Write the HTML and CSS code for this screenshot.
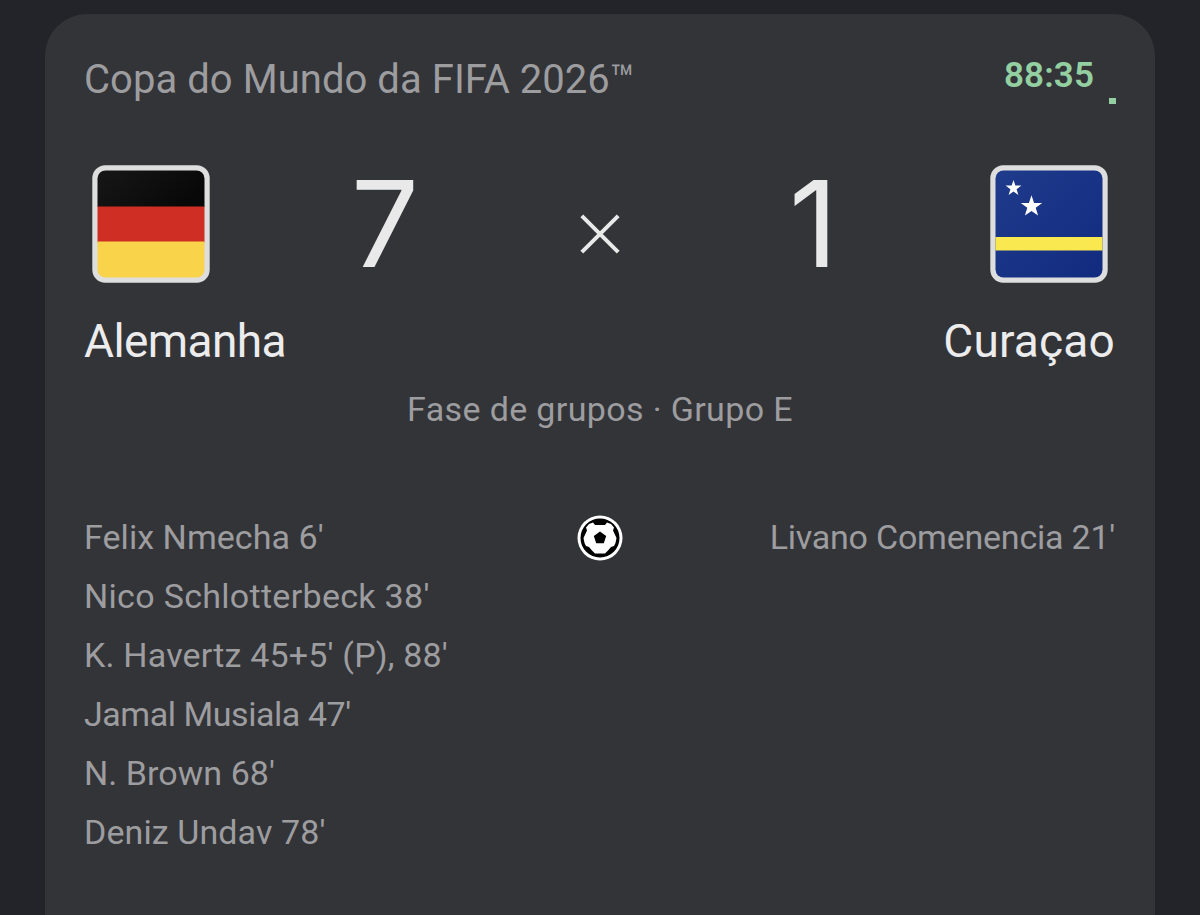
FILE: index.html
```html
<!DOCTYPE html>
<html lang="pt-BR">
<head>
<meta charset="utf-8">
<title>Alemanha × Curaçao</title>
<link rel="stylesheet" href="styles.css">
</head>
<body>
<main class="card">
  <header class="top">
    <h1 class="competition">Copa do Mundo da FIFA 2026™</h1>
    <div class="clock"><span class="time">88:35</span><span class="live-dot"></span></div>
  </header>

  <section class="score">
    <svg class="flag" viewBox="0 0 118 118" aria-label="Alemanha">
      <defs>
        <clipPath id="flag-clip"><rect x="5.5" y="5.5" width="107" height="107" rx="8"/></clipPath>
        <linearGradient id="navy" x1="0" y1="0" x2="1" y2="1"><stop offset="0" stop-color="#203c8c"/><stop offset="1" stop-color="#112a7e"/></linearGradient>
        <linearGradient id="black" x1="0" y1="0" x2="1" y2="0.4"><stop offset="0" stop-color="#181818"/><stop offset="1" stop-color="#080808"/></linearGradient>
      </defs>
      <rect x="0.3" y="0.3" width="117.4" height="117.4" rx="13" fill="#dedede"/>
      <g clip-path="url(#flag-clip)">
        <rect width="118" height="42" fill="url(#black)"/>
        <rect y="41.5" width="118" height="36" fill="#cf2e24"/>
        <rect y="76.5" width="118" height="42" fill="#f9d34a"/>
      </g>
    </svg>
    <div class="goals home">7</div>
    <svg class="times" viewBox="0 0 40 40"><path d="M1.800 1.800 38.200 38.200M38.200 1.800 1.800 38.200"/></svg>
    <div class="goals away">1</div>
    <svg class="flag" viewBox="0 0 118 118" aria-label="Curaçao">
      <rect x="0.3" y="0.3" width="117.4" height="117.4" rx="13" fill="#dedede"/>
      <g clip-path="url(#flag-clip)">
        <rect width="118" height="118" fill="url(#navy)"/>
        <rect y="72" width="118" height="13.5" fill="#f9e84f"/>
        <path fill="#fff" d="M23.5 15l1.9 5.6h6l-4.8 3.6 1.8 5.8-4.9-3.5-4.9 3.5 1.8-5.8-4.8-3.6h6z"/>
        <path fill="#fff" d="M41.5 30.200l2.600 7.700h8.100l-6.500 4.900 2.400 7.800-6.600-4.700-6.600 4.700 2.400-7.800-6.500-4.900h8.100z"/>
      </g>
    </svg>
  </section>

  <section class="teams">
    <span class="team germany">Alemanha</span>
    <span class="team curacao">Curaçao</span>
  </section>
  <p class="stage">Fase de grupos · Grupo E</p>

  <section class="scorers">
    <ul class="list">
      <li class="felix">Felix Nmecha 6'</li>
      <li class="nico">Nico Schlotterbeck 38'</li>
      <li class="kai">K. Havertz 45+5' (P), 88'</li>
      <li class="jamal">Jamal Musiala 47'</li>
      <li class="brown">N. Brown 68'</li>
      <li class="deniz">Deniz Undav 78'</li>
    </ul>
    <svg class="ball" viewBox="-23 -23 46 46">
      <circle r="22.500" fill="#fff"/>
      <circle r="19.500" fill="#000"/>
      <path fill="#fff" d="M-5-13H5L7-15.500 11-14 14-10.500 13-7.500 16.500 0 15.500 5 14 8 11 9 8 12.500 5 15.500H-5L-8 12.500-11 9-14 8-15.500 5-16.500 0-13-7.500-14-10.500-11-14-7-15.500z"/>
      <path fill="#000" d="M0-6.500 6.200-2 3.800 5.200H-3.800L-6.200-2z"/>
    </svg>
    <ul class="list right">
      <li class="livano">Livano Comenencia 21'</li>
    </ul>
  </section>
</main>
</body>
</html>
```
FILE: styles.css
```css
* { box-sizing: border-box; }
body {
  margin: 0;
  height: 915px;
  padding: 14px 45px 0;
  overflow: hidden;
  background: #232429;
  font-family: Roboto, sans-serif;
  color: #9d9da0;
}
.card {
  height: 901px;
  padding: 37px 40px 0;
  border-radius: 42px 42px 0 0;
  background: #333438;
}
.top { display: flex; justify-content: space-between; height: 56px; }
.competition { margin: 1px 0 0 -1px; font-size: 40px; font-weight: 400; line-height: 56px; letter-spacing: 0.05px; }
.clock { display: flex; gap: 15px; color: #93cfa0; }
.time { font-size: 35px; font-weight: 600; line-height: 49px; letter-spacing: 0.1px; }
.live-dot { width: 7px; height: 6px; margin: 47px -1px 0 0; background: #93cfa0; }

.score {
  display: grid;
  grid-template-columns: 118px 1fr 40px 1fr 118px;
  align-items: center;
  height: 118px;
  margin: 58px 7px 0;
  color: #e9e9ea;
}
.flag { width: 118px; height: 118px; }
.goals { font-family: Inter, sans-serif; font-size: 120px; font-weight: 430; line-height: 118px; }
.home { padding-left: 141px; }
.away { padding-left: 169px; }
.times { width: 40px; height: 40px; margin-top: 20px; fill: none; stroke: #e9e9ea; stroke-width: 4; }

.teams { display: flex; justify-content: space-between; margin-top: 28px; color: #ececed; }
.team { font-size: 46px; line-height: 60px; }
.germany { margin-left: -1px; letter-spacing: -0.6px; }
.curacao { letter-spacing: 0.2px; }
.stage { margin: 17px 0 0; font-size: 34px; line-height: 42px; text-align: center; letter-spacing: 0.36px; }

.scorers { display: grid; grid-template-columns: 1fr 46px 1fr; margin-top: 79px; }
.list { margin: -1px 0 0 -1px; padding: 0; list-style: none; font-size: 34px; line-height: 59px; white-space: nowrap; }
.right { margin-left: 0; text-align: right; }
.ball { width: 46px; height: 46px; margin-top: 6px; }
.felix { letter-spacing: 0.05px; }
.nico { letter-spacing: 0.3px; }
.kai { letter-spacing: 0.18px; }
.jamal { letter-spacing: -0.45px; }
.brown { letter-spacing: 0.05px; }
.deniz { letter-spacing: 0.1px; }
.livano { letter-spacing: -0.22px; }
```
